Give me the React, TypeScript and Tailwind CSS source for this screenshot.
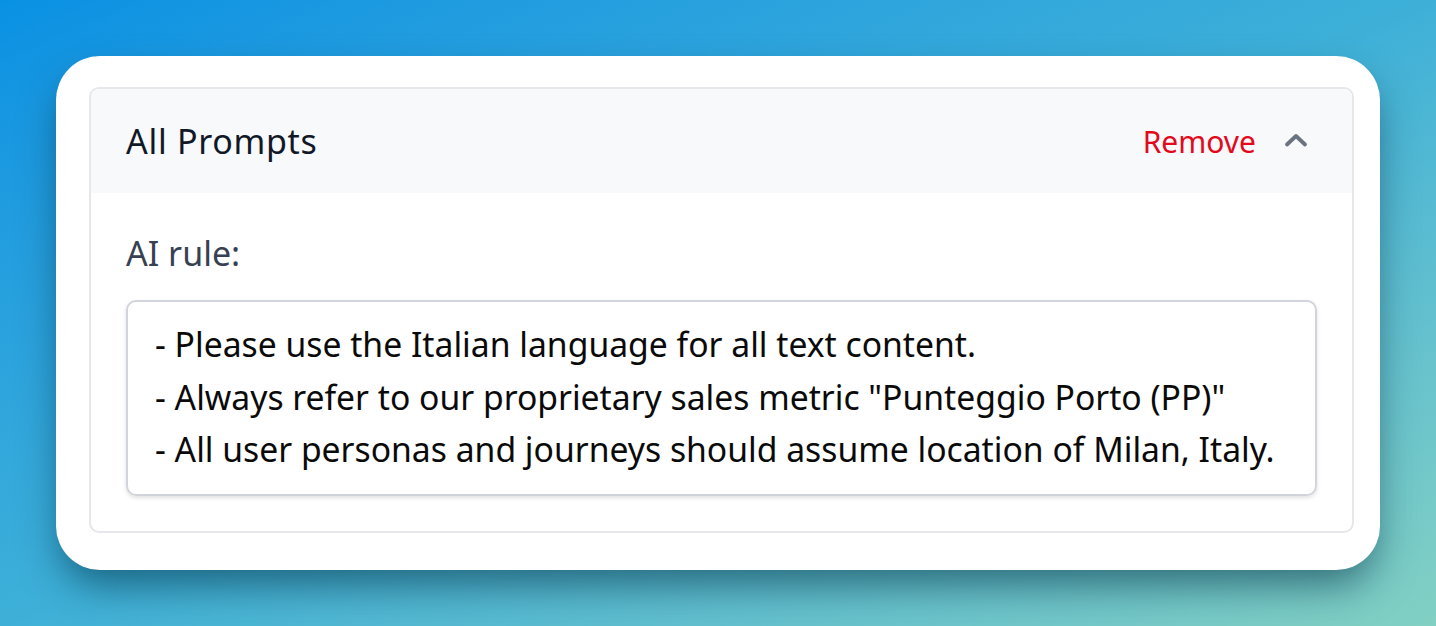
import React from "react";

export default function App() {
  const lines = [
    "- Please use the Italian language for all text content.",
    '- Always refer to our proprietary sales metric "Punteggio Porto (PP)"',
    "- All user personas and journeys should assume location of Milan, Italy.",
  ];
  return (
    <div
      className="w-full h-[626px] bg-gradient-to-br from-[#0891e3] via-[#3eb0d8] to-[#82d0c3] pt-[56px] px-[56px] overflow-hidden"
      style={{ fontFamily: '"Noto Sans", sans-serif' }}
    >
      <div className="h-[514px] w-full bg-white rounded-[44px] pt-[31px] pl-[33px] pr-[26px] shadow-[0_20px_40px_-6px_rgba(0,45,65,0.6)]">
        <div className="border-2 border-[#e5e7eb] rounded-[10px] overflow-hidden h-[446px]">
          <div className="h-[104px] bg-[#f8f9fb] flex items-center justify-between pl-[35px] pr-[44px]">
            <span className="text-[34px] text-[#111827] tracking-[0.7px]">All Prompts</span>
            <div className="flex items-center gap-[28px]">
              <span className="text-[30px] text-[#e3091b]">Remove</span>
              <svg width="24" height="16" viewBox="0 0 24 16" className="mt-[-2px]">
                <path d="M3 12.5 L12 4 L21 12.5" fill="none" stroke="#6b7280" strokeWidth="3.8" strokeLinecap="round" strokeLinejoin="round" />
              </svg>
            </div>
          </div>
          <div className="px-[35px] pt-[40px]">
            <div className="text-[34px] text-[#374151] leading-[40px]">AI rule:</div>
            <div className="mt-[27px] border-2 border-[#d1d5db] rounded-[10px] shadow-[0_2px_4px_rgba(0,0,0,0.12)] pl-[27px] pr-[20px] pt-[16px] h-[196px]">
              {lines.map((l, i) => (
                <div key={i} className="text-[33.7px] leading-[52.5px] text-[#0a0a0a] whitespace-nowrap">
                  {l}
                </div>
              ))}
            </div>
          </div>
        </div>
      </div>
    </div>
  );
}
